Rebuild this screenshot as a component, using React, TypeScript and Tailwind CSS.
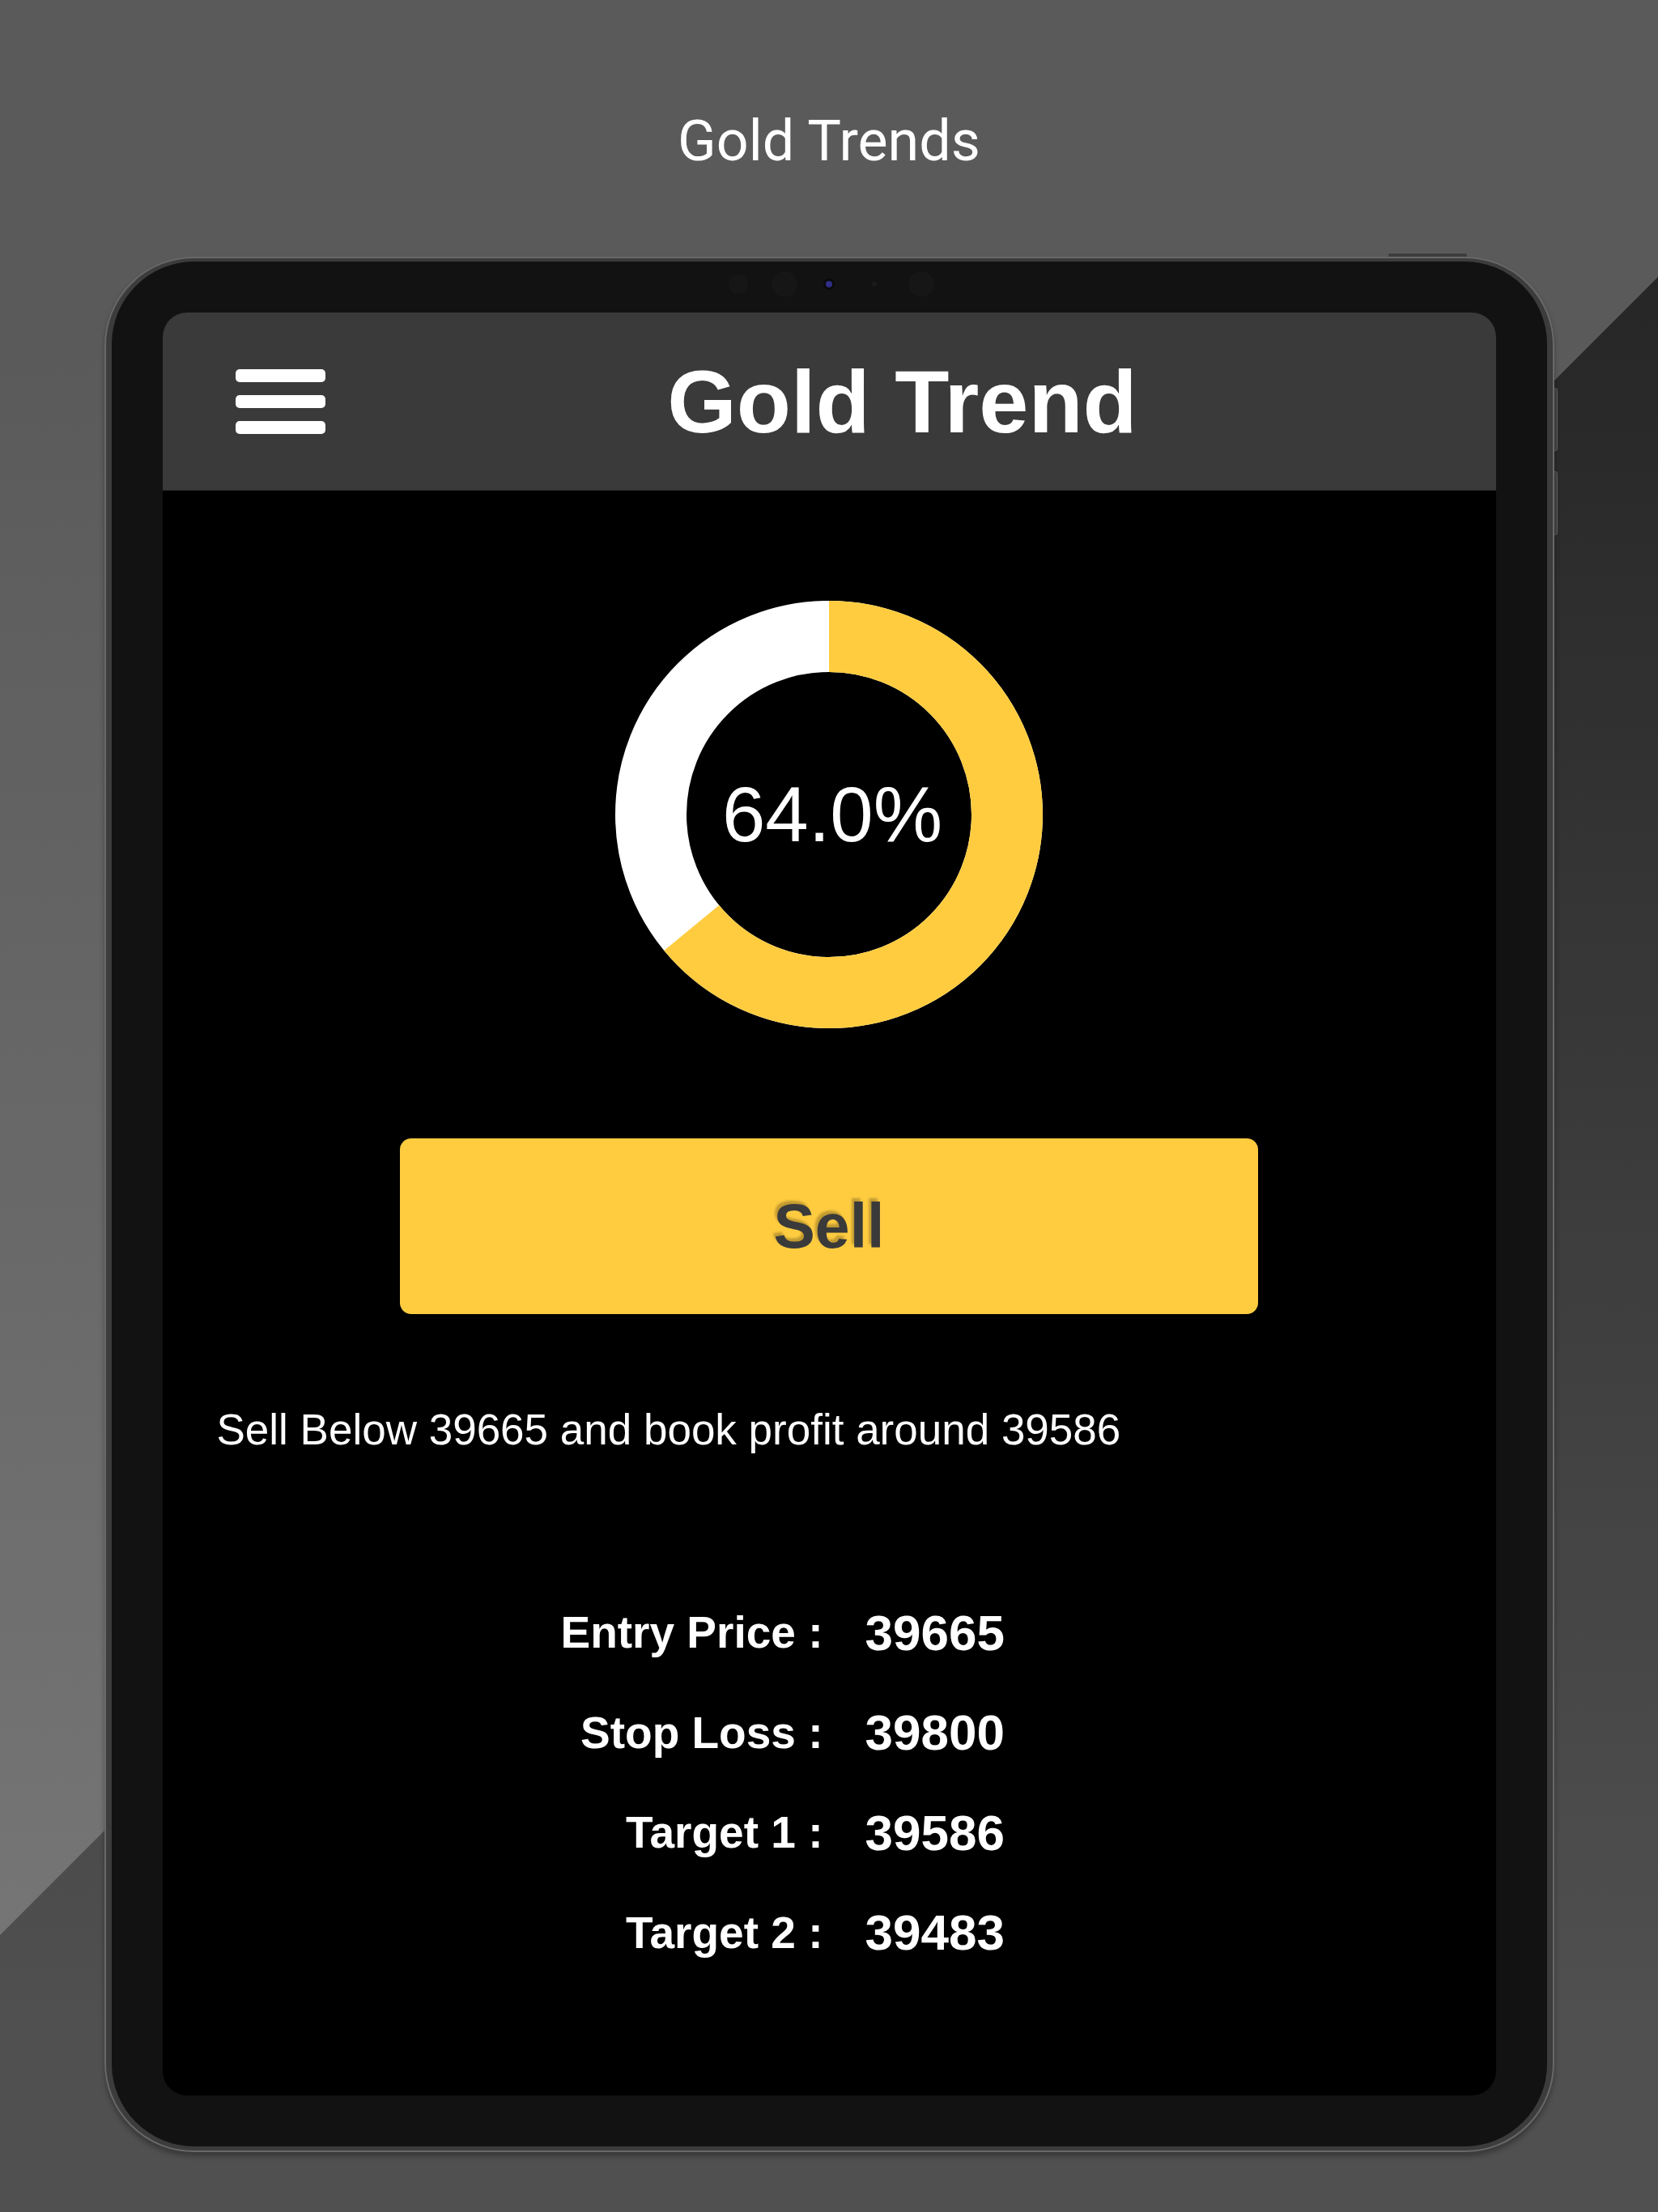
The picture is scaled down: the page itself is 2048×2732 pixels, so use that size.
import React from "react";

const GOLD = "#FFCC40";

const rows = [
  { label: "Entry Price :", value: "39665" },
  { label: "Stop Loss :", value: "39800" },
  { label: "Target 1 :", value: "39586" },
  { label: "Target 2 :", value: "39483" },
];

function Donut({ percent }: { percent: number }) {
  const r = 220;
  const c = 2 * Math.PI * r;
  return (
    <div className="grid place-items-center w-[528px] h-[528px]">
      <svg width="528" height="528" viewBox="0 0 528 528" className="[grid-area:1/1]">
        <circle cx="264" cy="264" r={r} fill="none" stroke="#ffffff" strokeWidth="88" />
        <circle
          cx="264"
          cy="264"
          r={r}
          fill="none"
          stroke={GOLD}
          strokeWidth="88"
          strokeDasharray={`${(percent / 100) * c} ${c}`}
          transform="rotate(-90 264 264)"
        />
      </svg>
      <span className="[grid-area:1/1] text-white text-[96px] leading-none pl-[8px] [font-family:'Liberation_Sans',Arial,sans-serif]">
        {percent.toFixed(1)}%
      </span>
    </div>
  );
}

function CameraBar() {
  return (
    <div className="h-[56px] flex items-center justify-center pl-[5px]">
      <div className="w-[24px] h-[24px] rounded-full bg-[#161616]" />
      <div className="ml-[29px] w-[32px] h-[32px] rounded-full bg-[#161616]" />
      <div className="ml-[32px] w-[14px] h-[14px] rounded-full bg-[#0a0a0a] flex items-center justify-center">
        <div className="w-[8px] h-[8px] rounded-full bg-[#2f2f86]" />
      </div>
      <div className="ml-[46px] w-[6px] h-[6px] rounded-full bg-[#1b1b1b]" />
      <div className="ml-[39px] w-[32px] h-[32px] rounded-full bg-[#161616]" />
    </div>
  );
}

function Screen() {
  return (
    <div className="mt-[7px] w-[1647px] h-[2202px] rounded-[30px] overflow-hidden bg-black flex flex-col [font-family:'Liberation_Sans',Arial,sans-serif]">
      <header className="h-[220px] shrink-0 bg-[#3a3a3a] border-b border-[#2c2c2c] flex items-center pl-[90px] pr-[20px]">
        <div className="flex flex-col gap-[16px]">
          <div className="w-[111px] h-[16px] rounded-[5px] bg-white" />
          <div className="w-[111px] h-[16px] rounded-[5px] bg-white" />
          <div className="w-[111px] h-[16px] rounded-[5px] bg-white" />
        </div>
        <h2 className="flex-1 text-center text-white font-bold text-[110px] leading-none">Gold Trend</h2>
      </header>

      <main className="flex flex-col items-center">
        <div className="mt-[136px]">
          <Donut percent={64} />
        </div>

        <button className="mt-[136px] w-[1060px] h-[217px] rounded-[14px] bg-[#FFCC40] text-[#3a3a3a] font-bold text-[77px] leading-none [text-shadow:-3px_-4px_3px_rgba(0,0,0,0.25)]">
          Sell
        </button>

        <p className="self-stretch mt-[113px] px-[67px] text-white text-[53px] leading-[60px]">
          Sell Below 39665 and book profit around 39586
        </p>

        <div className="self-stretch mt-[159px] flex flex-col">
          {rows.map((row) => (
            <div key={row.label} className="grid grid-cols-[842px_1fr] items-center h-[123.5px] text-white font-bold">
              <span className="text-right pr-[26px] text-[55px] leading-none">{row.label}</span>
              <span className="pl-[26px] text-[62px] leading-none">{row.value}</span>
            </div>
          ))}
        </div>
      </main>
    </div>
  );
}

function Tablet() {
  return (
    <div className="relative mt-[108px] w-[1791px] h-[2341px]">
      {/* hardware buttons */}
      <div className="absolute left-[1585px] -top-[5px] w-[99px] h-[6px] rounded-t-[3px] bg-[#3e3e3e] border border-[#5c5c5c]" />
      <div className="absolute -right-[4px] top-[162px] w-[6px] h-[78px] rounded-r-[3px] bg-[#444] border border-[#5e5e5e]" />
      <div className="absolute -right-[4px] top-[265px] w-[6px] h-[79px] rounded-r-[3px] bg-[#444] border border-[#5e5e5e]" />

      <div className="relative w-full h-full rounded-[110px] border-2 border-[#686868] bg-[#3c3c3c] pt-[4px] px-[7px] pb-[5px] shadow-[0_5px_6px_rgba(0,0,0,0.3)]">
        <div className="w-full h-full rounded-[102px] bg-[#121212] px-[63px] flex flex-col">
          <CameraBar />
          <Screen />
        </div>
      </div>
    </div>
  );
}

export default function App() {
  return (
    <div className="relative w-[2048px] h-[2732px] overflow-hidden bg-[#505050]">
      <div className="absolute inset-0 bg-[linear-gradient(to_bottom,#262626_340px,#505050_2500px)]" />
      <div className="absolute inset-0 [clip-path:polygon(0_0,100%_0,100%_342px,0_2390px)] bg-[linear-gradient(to_bottom,#5a5a5a_400px,#757575_2390px)]" />
      <div className="relative flex flex-col items-center">
        <h1 className="pt-[139px] text-white text-[70px] leading-[70px] font-normal [font-family:Roboto,'Noto_Sans',sans-serif]">
          Gold Trends
        </h1>
        <Tablet />
      </div>
    </div>
  );
}
